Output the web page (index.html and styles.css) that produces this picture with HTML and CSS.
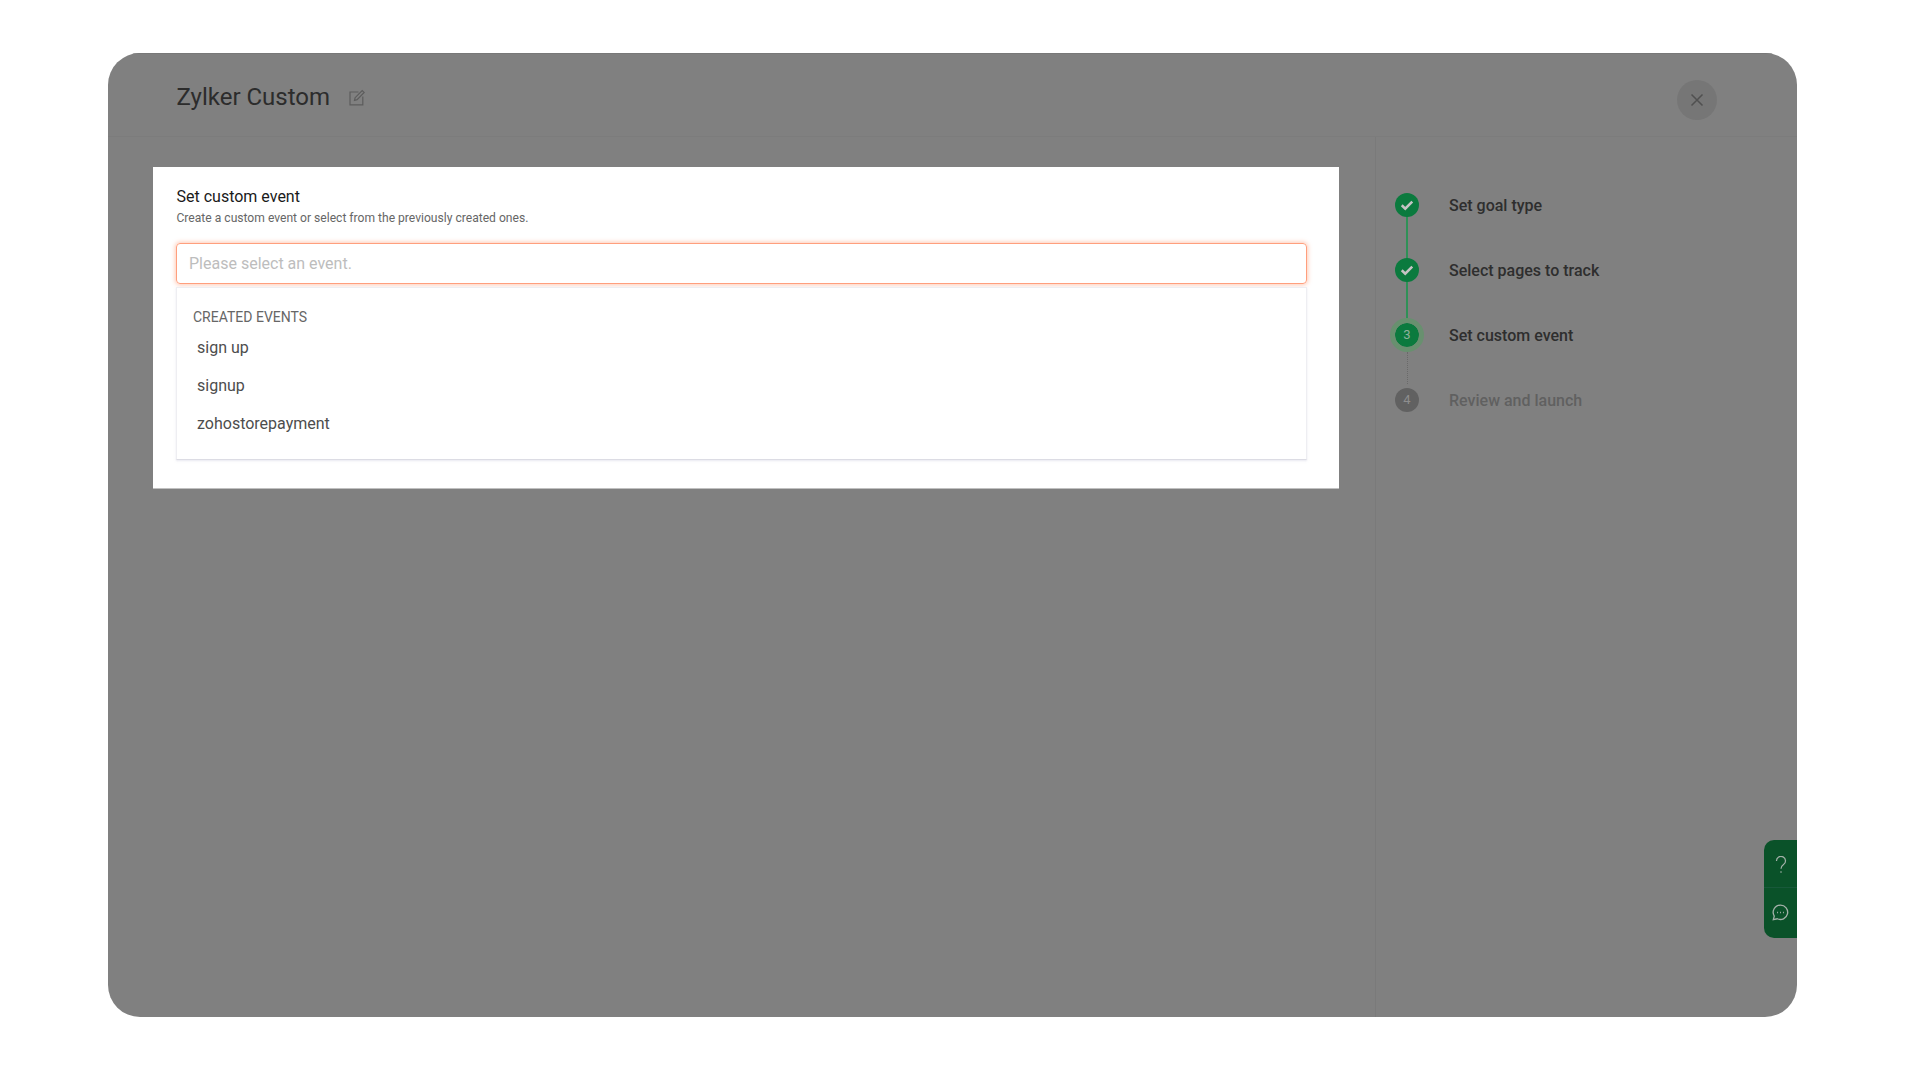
FILE: index.html
```html
<!DOCTYPE html>
<html>
  <head>
    <meta charset="utf-8">
    <title>Zylker Custom</title>
    <link rel="stylesheet" href="styles.css">
  </head>
  <body>
    <div class="frame">
      <div class="header">
        <h1 class="title">Zylker Custom</h1>
        <svg class="edit-icon" viewBox="0 0 16 16" fill="none" stroke="#5c5c5c" stroke-width="1.2">
          <path d="M9.5 2.5H1v12.8h12.8V7" />
          <path d="M5.5 10.8l.6-2.6L13.2 1l2 2-7.1 7.1z" />
        </svg>
        <button class="close">
          <svg viewBox="0 0 14 14" fill="none" stroke="#505050" stroke-width="1.5">
            <path d="M1.5 1.5l11 11M12.5 1.5l-11 11" />
          </svg>
        </button>
      </div>

      <div class="main">
        <div class="content">
          <div class="card">
            <div class="card-title">Set custom event</div>
            <div class="card-sub">Create a custom event or select from the previously created ones.</div>
            <div class="event-input">Please select an event.</div>
            <div class="dropdown">
              <div class="dropdown-label">CREATED EVENTS</div>
              <div class="dropdown-item">sign up</div>
              <div class="dropdown-item">signup</div>
              <div class="dropdown-item">zohostorepayment</div>
            </div>
          </div>
        </div>

        <div class="steps">
          <div class="step done">
            <div class="step-dot">
              <svg viewBox="0 0 12 12" fill="none" stroke="#c4c4c4" stroke-width="2.2">
                <path d="M1.5 6.2l3 2.9 6-6" />
              </svg>
            </div>
            <span class="step-name">Set goal type</span>
          </div>
          <div class="step done">
            <div class="step-dot">
              <svg viewBox="0 0 12 12" fill="none" stroke="#c4c4c4" stroke-width="2.2">
                <path d="M1.5 6.2l3 2.9 6-6" />
              </svg>
            </div>
            <span class="step-name">Select pages to track</span>
          </div>
          <div class="step current">
            <div class="step-dot">3</div>
            <span class="step-name">Set custom event</span>
          </div>
          <div class="step todo">
            <div class="step-dot">4</div>
            <span class="step-name">Review and launch</span>
          </div>
        </div>
      </div>

      <div class="help-tab">
        <div class="help-btn">
          <svg viewBox="0 0 14 22" fill="none" stroke="#a3b0a8" stroke-width="1.5">
            <path d="M1.5 6a5.5 5.5 0 1 1 8.6 4.5C8 12 7 13 7 15.5" />
            <path d="M7 18.5v2" />
          </svg>
        </div>
        <div class="help-btn">
          <svg class="chat-icon" viewBox="0 0 18 18" fill="none" stroke="#a3b0a8" stroke-width="1.4">
            <path d="M9 1.2a7.6 7.6 0 1 1-3.4 14.4L1.4 16.6l1-3.8A7.6 7.6 0 0 1 9 1.2z" />
            <path d="M5.4 9h1M8.5 9h1M11.6 9h1" />
          </svg>
        </div>
      </div>
    </div>
  </body>
</html>
```

FILE: styles.css
```css
* {
  box-sizing: border-box;
}

body {
  margin: 0;
  padding: 53px 123px 63px 108px;
  height: 1080px;
  background: #ffffff;
  font-family: Roboto, "Liberation Sans", sans-serif;
  overflow: hidden;
}

.frame {
  position: relative;
  display: flex;
  flex-direction: column;
  height: 100%;
  background: #808080;
  border-radius: 32px;
  overflow: hidden;
}

/* Header */
.header {
  display: flex;
  align-items: center;
  height: 84px;
  padding: 10px 80px 0 68.5px;
  border-top: 1px solid #787878;
  border-bottom: 1px solid #7c7c7c;
}

.title {
  margin: 0 0 6px;
  font-size: 24px;
  font-weight: 400;
  line-height: 32px;
  color: #2c2c2c;
}

.edit-icon {
  width: 16px;
  height: 17px;
  margin: 0 0 6px 19px;
}

.close {
  display: flex;
  align-items: center;
  justify-content: center;
  width: 40px;
  height: 40px;
  margin-left: auto;
  padding: 0;
  background: #767676;
  border: none;
  border-radius: 50%;
}

.close svg {
  width: 14px;
  height: 14px;
}

/* Main area */
.main {
  display: flex;
  flex: 1;
}

.content {
  width: 1268px;
  padding: 30px 0 0 45px;
  border-right: 1px solid #7a7a7a;
}

.card {
  width: 1186px;
  height: 322px;
  padding: 20px 32px 0 23.5px;
  background: #ffffff;
  border-bottom: 1px solid #c0c0c0;
}

.card-title {
  font-size: 16px;
  line-height: 20px;
  color: #1a1a1a;
}

.card-sub {
  margin-top: 3px;
  font-size: 12.1px;
  line-height: 16px;
  color: #666666;
}

.event-input {
  height: 41px;
  margin: 17px 0 0 -0.5px;
  padding: 0 12px;
  font-size: 16px;
  line-height: 39px;
  color: #bdbdbd;
  border: 1px solid #ff9f7d;
  border-radius: 4px;
  box-shadow: 0 0 4px 1px rgba(255, 150, 110, 0.5);
}

.dropdown {
  height: 173px;
  margin: 3px 0 0 -0.5px;
  padding: 20px 16px 0;
  background: #ffffff;
  border: 1px solid #eeeef2;
  border-bottom: 1px solid #dcdce4;
  box-shadow: 0 1px 2px rgba(210, 210, 225, 0.5);
}

.dropdown-label {
  margin-bottom: 3px;
  font-size: 14px;
  line-height: 18px;
  color: #666666;
}

.dropdown-item {
  height: 38px;
  padding-left: 4px;
  font-size: 16px;
  line-height: 38px;
  color: #4d4d4d;
}

/* Steps */
.steps {
  display: flex;
  flex-direction: column;
  padding: 35px 0 0 19px;
}

.step {
  position: relative;
  display: flex;
  align-items: center;
  height: 65px;
}

.step-dot {
  display: flex;
  flex: none;
  align-items: center;
  justify-content: center;
  width: 24px;
  height: 24px;
  font-size: 13px;
  border-radius: 50%;
  z-index: 1;
}

.step-dot svg {
  width: 14px;
  height: 14px;
}

.step-name {
  margin-left: 30px;
  padding-top: 1px;
  font-size: 16px;
  font-weight: 500;
  color: #2e2e2e;
}

.step.done .step-dot {
  background: #0b7a3e;
}

.step.done::after {
  content: "";
  position: absolute;
  left: 11px;
  top: 44px;
  height: 44px;
  border-left: 2px solid #2f9157;
}

.step.current .step-dot {
  width: 34px;
  height: 34px;
  margin: 0 -5px;
  background: #0b7a3e;
  background-clip: padding-box;
  color: #8fb09c;
  border: 5px solid #68906f;
}

.step.current::after {
  content: "";
  position: absolute;
  left: 12px;
  top: 50px;
  height: 32px;
  border-left: 1px dotted #6a6a6a;
}

.step.todo .step-dot {
  background: #616161;
  color: #8e8e8e;
}

.step.todo .step-name {
  color: #606060;
}

/* Help tab sits over the frame edge */
.help-tab {
  position: absolute;
  right: 0;
  top: 787px;
  width: 33px;
  height: 98px;
  background: #0a5229;
  border-radius: 10px 0 0 10px;
}

.help-btn {
  display: flex;
  align-items: center;
  justify-content: center;
  height: 50px;
  padding-bottom: 2px;
}

.help-btn:first-child {
  height: 48px;
  padding: 3px 0 0;
  border-bottom: 1px solid #18593a;
}

.help-btn svg {
  width: 12px;
  height: 18px;
}

.help-btn .chat-icon {
  width: 17px;
  height: 17px;
}
```
